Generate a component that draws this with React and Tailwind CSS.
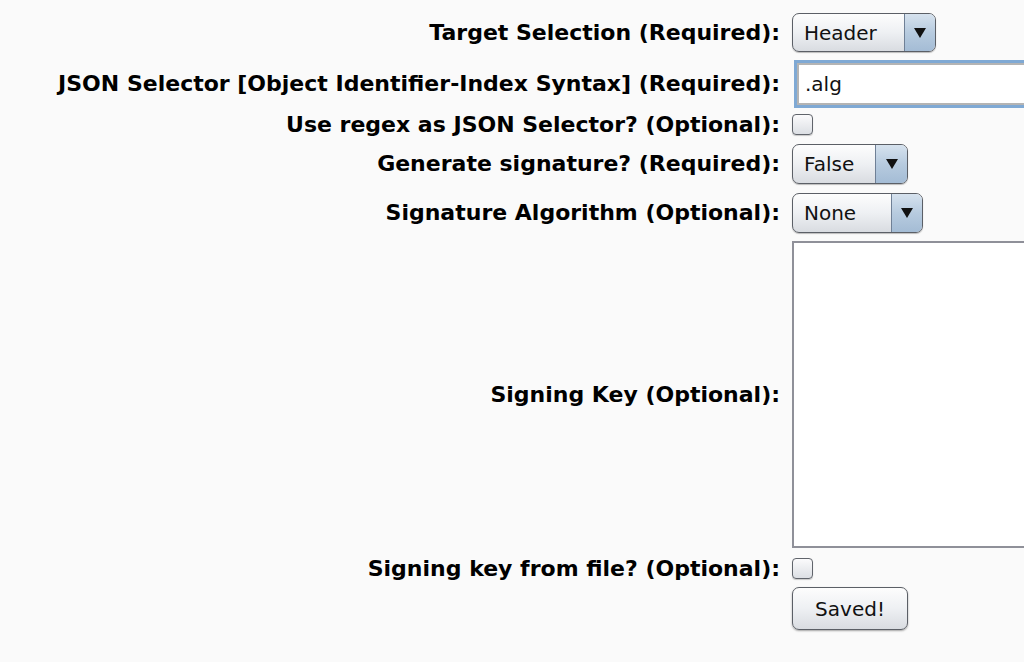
const labelFont = { fontFamily: '"DejaVu Sans", Verdana, sans-serif' };

function Label({ children }) {
  return (
    <div className="flex items-center justify-end text-right text-[22px] font-bold text-black leading-none whitespace-nowrap">
      {children}
    </div>
  );
}

function Dropdown({ value, width, arrowLeft }) {
  return (
    <div
      className="flex h-full rounded-[7px] border border-[#5b5f66] bg-gradient-to-b from-[#fdfdfd] via-[#eef0f3] to-[#d9dce1] overflow-hidden shadow-[0_1px_1px_rgba(0,0,0,0.25)]"
      style={{ width }}
    >
      <div className="flex items-center pl-[11px] text-[20px] text-[#111]" style={{ width: arrowLeft }}>
        {value}
      </div>
      <div className="flex flex-1 items-center justify-center border-l border-[#6f8096] bg-gradient-to-b from-[#d6e2ee] via-[#b7cbdf] to-[#a4bcd5]">
        <svg width="14" height="12" viewBox="0 0 14 12">
          <path d="M1 1 L13 1 L7 11 Z" fill="#111" />
        </svg>
      </div>
    </div>
  );
}

function Checkbox() {
  return (
    <div className="w-[21px] h-[21px] rounded-[4px] border border-[#60646b] bg-gradient-to-b from-[#fbfbfc] to-[#dcdfe4] shadow-[0_1px_1px_rgba(0,0,0,0.2)]" />
  );
}

export default function App() {
  return (
    <div className="w-[1024px] h-[662px] overflow-hidden bg-[#fafafa] pt-[13px]" style={labelFont}>
      <div className="grid grid-cols-[780px_1fr] gap-x-[12px]">
        <Label>Target Selection (Required):</Label>
        <div className="h-[39px]">
          <Dropdown value="Header" width={144} arrowLeft={111} />
        </div>

        <div className="col-span-2 h-[8px]" />
        <Label>JSON Selector [Object Identifier-Index Syntax] (Required):</Label>
        <div className="h-[48px] pl-[2px]">
          <div className="h-full w-[300px] border-[3px] border-[#7fa9d4] bg-white">
            <div className="h-full border-2 border-[#b4b4b4] flex items-center pl-[6px] text-[20px] text-[#111]">
              .alg
            </div>
          </div>
        </div>

        <div className="col-span-2 h-[6px]" />
        <Label>Use regex as JSON Selector? (Optional):</Label>
        <div className="h-[21px]">
          <Checkbox />
        </div>

        <div className="col-span-2 h-[8px]" />
        <Label>Generate signature? (Required):</Label>
        <div className="h-[40px]">
          <Dropdown value="False" width={116} arrowLeft={82} />
        </div>

        <div className="col-span-2 h-[9px]" />
        <Label>Signature Algorithm (Optional):</Label>
        <div className="h-[40px]">
          <Dropdown value="None" width={131} arrowLeft={98} />
        </div>

        <div className="col-span-2 h-[8px]" />
        <Label>Signing Key (Optional):</Label>
        <div className="h-[307px]">
          <div className="h-full w-[300px] border-2 border-[#8f9099] bg-white" />
        </div>

        <div className="col-span-2 h-[9px]" />
        <Label>Signing key from file? (Optional):</Label>
        <div className="h-[23px] flex items-center">
          <Checkbox />
        </div>

        <div className="col-span-2 h-[7px]" />
        <div />
        <div className="h-[44px]">
          <button className="h-[43px] w-[116px] rounded-[7px] border border-[#5b5f66] bg-gradient-to-b from-[#fdfdfd] via-[#eef0f3] to-[#d9dce1] text-[20px] text-[#111] shadow-[0_1px_2px_rgba(0,0,0,0.35)]">
            Saved!
          </button>
        </div>
      </div>
    </div>
  );
}
